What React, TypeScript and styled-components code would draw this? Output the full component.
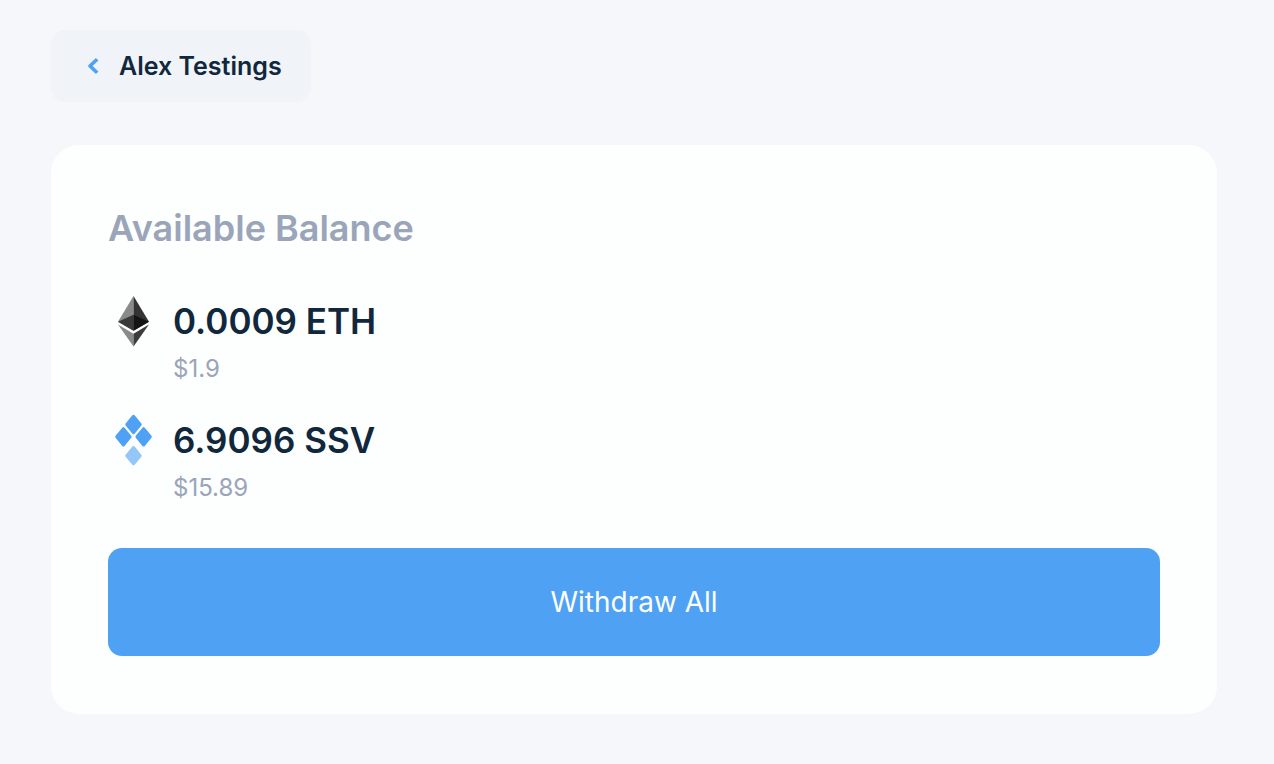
import React from 'react';
import styled, { createGlobalStyle } from 'styled-components';

const Global = createGlobalStyle`
  *, *::before, *::after { box-sizing: border-box; }
  body {
    margin: 0;
    background: #f6f7fb;
    color: #11283c;
    font-family: Inter, "Liberation Sans", sans-serif;
  }
`;

const Page = styled.main`
  display: flex;
  flex-direction: column;
  align-items: flex-start;
  gap: 43px;
  padding: 30px 57px 50px 51px;
`;

const BackButton = styled.button`
  display: flex;
  align-items: center;
  gap: 19px;
  height: 72px;
  padding: 0 29px 0 36px;
  border: 0;
  border-radius: 14px;
  background: #f0f3f8;
  color: inherit;
  font: 600 25px/32px Inter, "Liberation Sans", sans-serif;
  cursor: pointer;
`;

const Card = styled.section`
  align-self: stretch;
  padding: 57px 57px 58px;
  border-radius: 28px;
  background: #fdfefe;
`;

const Title = styled.h1`
  margin: 0 0 40px;
  color: #9aa5ba;
  font-size: 36px;
  font-weight: 600;
  line-height: 52px;
`;

const Balances = styled.ul`
  display: flex;
  flex-direction: column;
  gap: 26px;
  margin: 0 0 42px;
  padding: 0;
  list-style: none;
`;

const Balance = styled.li`
  display: flex;
  gap: 14px;
`;

const Amount = styled.p`
  margin: 0 0 3px;
  font-size: 35px;
  font-weight: 600;
  line-height: 54px;
`;

const Fiat = styled.p`
  margin: 0;
  color: #9aa5ba;
  font-size: 24px;
  line-height: 36px;
`;

const WithdrawButton = styled.button`
  display: block;
  width: 100%;
  height: 108px;
  border: 0;
  border-radius: 14px;
  background: #4fa2f3;
  color: #fdfefe;
  font: 400 28px/40px Inter, "Liberation Sans", sans-serif;
  cursor: pointer;
`;

const EthIcon = () => (
  <svg width="51" height="54" viewBox="0 0 51 54" aria-hidden="true">
    <path d="M25.5 2 10 27.7 25.5 36.8Z" fill="#8a8a8a" />
    <path d="M25.5 2 41 27.7 25.5 36.8Z" fill="#343434" />
    <path d="M10 27.7 25.5 20.7V36.8Z" fill="#393939" />
    <path d="M41 27.7 25.5 20.7V36.8Z" fill="#141414" />
    <path d="M10 30.6 25.5 39.8V52.4Z" fill="#8a8a8a" />
    <path d="M41 30.6 25.5 39.8V52.4Z" fill="#3c3c3b" />
  </svg>
);

const SsvIcon = () => (
  <svg width="51" height="54" viewBox="0 0 51 54" strokeWidth="3" strokeLinejoin="round" aria-hidden="true">
    <g fill="#4fa2f3" stroke="#4fa2f3">
      <path d="M25.5 3.3 32.2 11.5 25.5 19.7 18.8 11.5Z" />
      <path d="M15.4 15.6 22.1 23.8 15.4 32 8.7 23.8Z" />
      <path d="M35.6 15.6 42.3 23.8 35.6 32 28.9 23.8Z" />
    </g>
    <path d="M25.5 34.5 32.2 42.7 25.5 50.9 18.8 42.7Z" fill="#93c7f8" stroke="#93c7f8" />
  </svg>
);

const balances = [
  { amount: '0.0009 ETH', fiat: '$1.9', Icon: EthIcon },
  { amount: '6.9096 SSV', fiat: '$15.89', Icon: SsvIcon },
];

export default function App() {
  return (
    <>
      <Global />
      <Page>
        <BackButton type="button">
          <svg
            width="13"
            height="18"
            viewBox="0 0 13 18"
            fill="none"
            stroke="#4fa2f3"
            strokeWidth="3.6"
            strokeLinejoin="round"
            aria-hidden="true"
          >
            <path d="M10.2 2.2 3 9 10.2 15.8" />
          </svg>
          Alex Testings
        </BackButton>
        <Card>
          <Title>Available Balance</Title>
          <Balances>
            {balances.map(({ amount, fiat, Icon }) => (
              <Balance key={amount}>
                <Icon />
                <div>
                  <Amount>{amount}</Amount>
                  <Fiat>{fiat}</Fiat>
                </div>
              </Balance>
            ))}
          </Balances>
          <WithdrawButton type="button">Withdraw All</WithdrawButton>
        </Card>
      </Page>
    </>
  );
}
